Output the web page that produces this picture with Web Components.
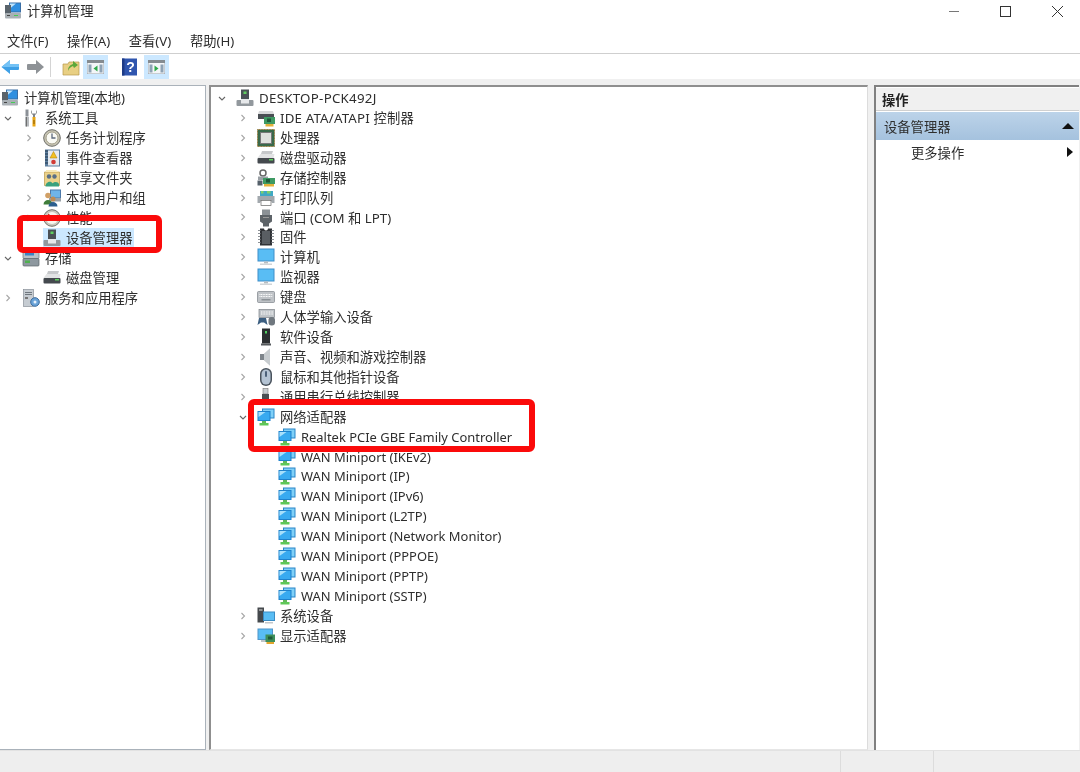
<!DOCTYPE html>
<html lang="zh">
<head>
<meta charset="utf-8">
<title>计算机管理</title>
<style>
  html, body { margin: 0; height: 772px; overflow: hidden; background: #fff; }
  body { font: 13.3px "Noto Sans", "Noto Sans CJK SC", sans-serif; color: #2e2e2e; }
</style>
</head>
<body>
<mmc-window>
  <tree-row slot="left" level="0" icon="mgmt" arrow="none">计算机管理(本地)</tree-row>
  <tree-row slot="left" level="1" icon="tools" arrow="open">系统工具</tree-row>
  <tree-row slot="left" level="2" icon="clock" arrow="closed">任务计划程序</tree-row>
  <tree-row slot="left" level="2" icon="viewer" arrow="closed">事件查看器</tree-row>
  <tree-row slot="left" level="2" icon="share" arrow="closed">共享文件夹</tree-row>
  <tree-row slot="left" level="2" icon="users" arrow="closed">本地用户和组</tree-row>
  <tree-row slot="left" level="2" icon="perf" arrow="closed">性能</tree-row>
  <tree-row slot="left" level="2" icon="device" arrow="none" selected>设备管理器</tree-row>
  <tree-row slot="left" level="1" icon="storage" arrow="open">存储</tree-row>
  <tree-row slot="left" level="2" icon="hdd" arrow="none">磁盘管理</tree-row>
  <tree-row slot="left" level="1" icon="services" arrow="closed">服务和应用程序</tree-row>

  <tree-row slot="center" level="0" icon="device" arrow="open" style="letter-spacing:.27px">DESKTOP-PCK492J</tree-row>
  <tree-row slot="center" level="1" icon="ide" arrow="closed" style="letter-spacing:.17px">IDE ATA/ATAPI 控制器</tree-row>
  <tree-row slot="center" level="1" icon="cpu" arrow="closed">处理器</tree-row>
  <tree-row slot="center" level="1" icon="hdd" arrow="closed">磁盘驱动器</tree-row>
  <tree-row slot="center" level="1" icon="storectl" arrow="closed">存储控制器</tree-row>
  <tree-row slot="center" level="1" icon="printer" arrow="closed">打印队列</tree-row>
  <tree-row slot="center" level="1" icon="port" arrow="closed">端口 (COM 和 LPT)</tree-row>
  <tree-row slot="center" level="1" icon="firmware" arrow="closed">固件</tree-row>
  <tree-row slot="center" level="1" icon="monitor" arrow="closed">计算机</tree-row>
  <tree-row slot="center" level="1" icon="monitor" arrow="closed">监视器</tree-row>
  <tree-row slot="center" level="1" icon="keyboard" arrow="closed">键盘</tree-row>
  <tree-row slot="center" level="1" icon="hid" arrow="closed">人体学输入设备</tree-row>
  <tree-row slot="center" level="1" icon="software" arrow="closed">软件设备</tree-row>
  <tree-row slot="center" level="1" icon="sound" arrow="closed">声音、视频和游戏控制器</tree-row>
  <tree-row slot="center" level="1" icon="mouse" arrow="closed">鼠标和其他指针设备</tree-row>
  <tree-row slot="center" level="1" icon="usb" arrow="closed">通用串行总线控制器</tree-row>
  <tree-row slot="center" level="1" icon="net" arrow="open">网络适配器</tree-row>
  <tree-row slot="center" level="2" icon="net" arrow="none" latin>Realtek PCIe GBE Family Controller</tree-row>
  <tree-row slot="center" level="2" icon="net" arrow="none" latin>WAN Miniport (IKEv2)</tree-row>
  <tree-row slot="center" level="2" icon="net" arrow="none" latin>WAN Miniport (IP)</tree-row>
  <tree-row slot="center" level="2" icon="net" arrow="none" latin>WAN Miniport (IPv6)</tree-row>
  <tree-row slot="center" level="2" icon="net" arrow="none" latin>WAN Miniport (L2TP)</tree-row>
  <tree-row slot="center" level="2" icon="net" arrow="none" latin>WAN Miniport (Network Monitor)</tree-row>
  <tree-row slot="center" level="2" icon="net" arrow="none" latin>WAN Miniport (PPPOE)</tree-row>
  <tree-row slot="center" level="2" icon="net" arrow="none" latin>WAN Miniport (PPTP)</tree-row>
  <tree-row slot="center" level="2" icon="net" arrow="none" latin>WAN Miniport (SSTP)</tree-row>
  <tree-row slot="center" level="1" icon="sys" arrow="closed">系统设备</tree-row>
  <tree-row slot="center" level="1" icon="display" arrow="closed">显示适配器</tree-row>
</mmc-window>

<script>
const ICONS = {
  mgmt: `<rect x="5" y="0.500" width="12" height="10" fill="#3a6ea5"/><rect x="6" y="1.500" width="10" height="8" fill="#2f8fe0"/><path d="M6 1.500h6l-6 5z" fill="#bfe3fb"/><rect x="1" y="3" width="6" height="9" fill="#59636b"/><rect x="1" y="11" width="16" height="5.500" rx="1" fill="#a9b0b5"/><rect x="3" y="13" width="3" height="1" fill="#444"/><rect x="10" y="13" width="4" height="1" fill="#4c5"/>`,
  tools: `<path d="M5 0.500v7" stroke="#8b9096" stroke-width="3"/><path d="M3 8h4v9.500H3z" fill="#b6babd"/><path d="M4 8h1v9.500H4z" fill="#6f6f6f"/><path d="M10 1c-1.500 1.500-1 4 1 5v2h2V6c2-1 2.500-3.500 1-5v3.500h-4z" fill="#808488"/><path d="M10.500 8h3v9.500h-3z" fill="#e8a615"/><path d="M11.500 11h1v4h-1z" fill="#8a5a00"/>`,
  clock: `<circle cx="9" cy="9" r="8.300" fill="#c8c5b4" stroke="#6d6d66"/><circle cx="9" cy="9" r="6" fill="#fafaf4" stroke="#a39f8a"/><path d="M9 4.500V9h3.500" fill="none" stroke="#5e6a7d" stroke-width="1.300"/>`,
  viewer: `<rect x="2" y="0.500" width="15" height="17" fill="#5c7e9e"/><rect x="5" y="1.500" width="11" height="15" fill="#e6eaf0"/><path d="M2 2h3M2 5h3M2 8h3M2 11h3M2 14h3" stroke="#22364d"/><path d="M10.500 2.500l3.500 6.500H7z" fill="#f4c020" stroke="#a87a00" stroke-width=".5"/><circle cx="10.500" cy="13" r="2.300" fill="#d23b35"/>`,
  share: `<path d="M1.500 3h15v13.500h-15z" fill="#ecd28a" stroke="#b9994a" stroke-width=".7"/><path d="M3 1h10l3 2H3z" fill="#f8e9b8"/><circle cx="6" cy="7.500" r="2.200" fill="#5a6f86"/><circle cx="11.500" cy="7.500" r="2.200" fill="#5a6f86"/><path d="M2.500 17.500c0-5 6-6 7-3v3zM8 17.500c0-5 7-6 8-2.500v2.500z" fill="#3aa17d"/>`,
  users: `<rect x="7" y="0.500" width="11" height="9" fill="#4b78a8"/><rect x="8" y="1.500" width="9" height="7" fill="#6fb4e8"/><rect x="6" y="9" width="12" height="3.500" fill="#9aa2a9"/><circle cx="5" cy="6.500" r="2.800" fill="#d1a066"/><path d="M0.500 15.500c0-6 9-6 9 0z" fill="#3f7d3a"/><circle cx="10" cy="10" r="2.500" fill="#bf8b52"/><path d="M5.500 17.500c0-6 9-6 9 0z" fill="#2c5f8f"/>`,
  perf: `<circle cx="9" cy="9" r="8.300" fill="#c9c7bd" stroke="#70706a"/><circle cx="9" cy="9" r="6" fill="#f7f6f0"/><path d="M9 9L5 5" stroke="#c9372c" stroke-width="1.500"/>`,
  device: `<rect x="5" y="0.500" width="8" height="10" fill="#4a5056"/><rect x="7.500" y="2.500" width="3" height="2.500" fill="#5fd05f"/><rect x="0.500" y="11" width="17" height="6" rx="1" fill="#92989d"/><rect x="5" y="10" width="8" height="4.500" fill="#e6e8ea"/>`,
  storage: `<rect x="1" y="1.500" width="16" height="8" rx="1" fill="#bac2c8" stroke="#6f7880" stroke-width=".7"/><rect x="1" y="9.500" width="16" height="7.500" rx="1" fill="#8e989f" stroke="#5c656c" stroke-width=".7"/><rect x="3" y="3.500" width="9" height="3" fill="#3c84c4"/><rect x="3" y="11.500" width="5" height="2.500" fill="#4fb14f"/>`,
  hdd: `<path d="M4 5l1-3h11l-1 3z" fill="#c6c8ca"/><path d="M0.500 9l3-4h14l-1 4z" fill="#e2e3e4"/><rect x="0.500" y="9" width="17" height="5.500" rx="1" fill="#44494e"/><rect x="12" y="10" width="4" height="1.500" fill="#5fd05f"/>`,
  services: `<rect x="1.500" y="0.500" width="10" height="17" fill="#c6ccd2" stroke="#8a929a" stroke-width=".7"/><path d="M3 3.500h7M3 5.500h7" stroke="#6f777e"/><rect x="3" y="8" width="3" height="2" fill="#777"/><circle cx="13" cy="13" r="4.300" fill="#6aa3d8" stroke="#3a6b9e"/><circle cx="13" cy="13" r="1.500" fill="#e7f1fb"/>`,
  ide: `<path d="M2 2h14l1 3H1z" fill="#d8d9da"/><rect x="1" y="5" width="16" height="5" fill="#4a4f54"/><rect x="7" y="8" width="11" height="7" fill="#3e9a63"/><rect x="10" y="9.500" width="4" height="3.500" fill="#1f5a39"/><rect x="8.500" y="15" width="8" height="2.500" fill="#e3b13a"/>`,
  cpu: `<rect x="0.500" y="0.500" width="17" height="17" fill="#39694a" stroke="#9d7b39" stroke-dasharray="1 .6"/><rect x="3.500" y="3.500" width="11" height="11" fill="#dfe0dd" stroke="#777"/>`,
  storectl: `<circle cx="6" cy="4" r="3" fill="none" stroke="#666" stroke-width="1.500"/><path d="M1 7.500h10v3.500H1z" fill="#9aa0a5"/><rect x="6" y="9" width="12" height="6" fill="#3e9a63"/><rect x="9" y="10" width="4" height="3.500" fill="#1f5a39"/><rect x="7" y="15" width="10" height="2.500" fill="#e3b13a"/><path d="M0.500 11.500h5v5h-5z" fill="#55606a"/>`,
  printer: `<rect x="3" y="2" width="13" height="5" fill="#3fa8c4"/><path d="M4 2h2.500v2.500H4zM10 2h3.500v2.500H10z" fill="#7fcf6a"/><path d="M0.500 7h17v7h-2.500l-1-2.500H4L3 14H0.500z" fill="#a2a8ad"/><rect x="4" y="11.500" width="10" height="5" fill="#fff" stroke="#666" stroke-width=".7"/>`,
  port: `<rect x="5" y="0.500" width="8" height="5.500" fill="#8b9196"/><path d="M3 6h12v6.500l-3 2v3H6v-3l-3-2z" fill="#5d6368"/><path d="M6 8.500h6" stroke="#999"/>`,
  firmware: `<path d="M3 0.500h4a2 2 0 004 0h4v17H3z" fill="#2f3236"/><rect x="5" y="3" width="8" height="13" fill="#595e63"/><path d="M1 2.500h2.500M1 5.500h2.500M1 8.500h2.500M1 11.500h2.500M1 14.500h2.500M14.500 2.500H17M14.500 5.500H17M14.500 8.500H17M14.500 11.500H17M14.500 14.500H17" stroke="#8c9196"/>`,
  monitor: `<rect x="0.500" y="0.500" width="17" height="13" fill="#3f8ec9"/><rect x="1.500" y="1.500" width="15" height="11" fill="#59bdf4"/><rect x="7" y="13.500" width="4" height="2" fill="#b8bdc1"/><rect x="3" y="15.500" width="12" height="1.500" fill="#d2d5d8"/>`,
  keyboard: `<rect x="0.500" y="3.500" width="17" height="11" rx="1" fill="#bfc3c7" stroke="#7e8489" stroke-width=".7"/><path d="M2.500 6.500h13M2.500 8.500h13" stroke="#fff" stroke-dasharray="1 .6"/><rect x="4.500" y="11" width="9" height="1.500" fill="#8b9196"/>`,
  hid: `<rect x="2" y="1.500" width="15.500" height="8" fill="#bfc4c8" stroke="#7e8489" stroke-width=".7"/><path d="M4 4h12M4 6h12" stroke="#fff" stroke-dasharray="1 .6"/><path d="M0.500 17l1.500-7h7l1.500 7-3.500-2.500H4z" fill="#3b5e80"/><rect x="11.500" y="9" width="6.500" height="8.500" rx="3" fill="#6f777e"/>`,
  software: `<rect x="5" y="0.500" width="8" height="15" fill="#2b2e31"/><rect x="8" y="3" width="2" height="2.500" fill="#4fd05f"/><rect x="4" y="15.500" width="10" height="2" fill="#55595d"/>`,
  sound: `<path d="M3 6h4l6-5.500v17L7 12H3z" fill="#a9afb4"/><path d="M7 6l6-5.500v17L7 12z" fill="#c7cccf"/><path d="M3 6h4v6H3z" fill="#7d848a"/>`,
  mouse: `<rect x="3" y="0" width="12" height="18" rx="6" fill="#49525c"/><rect x="4.500" y="1.500" width="9" height="15" rx="4.500" fill="#b4c3d3"/><rect x="8" y="3" width="2" height="6" rx="1" fill="#4b6079"/>`,
  usb: `<rect x="6" y="0.500" width="5" height="5.500" fill="#c8ccd0" stroke="#777" stroke-width=".6"/><rect x="5" y="6" width="7" height="11" fill="#4b4f53"/>`,
  net: `<rect x="5" y="0.500" width="12.500" height="10" fill="#2a86c8"/><rect x="6" y="1.500" width="10.500" height="8" fill="#7fd0f8"/><rect x="0.500" y="3" width="13" height="10" fill="#1f82cc"/><rect x="1.500" y="4" width="11" height="8" fill="#38aaf0"/><path d="M1.500 4h7l-7 5z" fill="#a8e0fb"/><rect x="5" y="13" width="4" height="2" fill="#62b85c"/><rect x="2.500" y="15" width="9" height="2.500" fill="#5fc858"/>`,
  sys: `<rect x="0.500" y="0.500" width="6.500" height="15" fill="#45494d"/><rect x="2" y="2.500" width="3.500" height="1" fill="#ddd"/><rect x="6" y="4.500" width="12" height="9.500" fill="#3b8cc4"/><rect x="7" y="5.500" width="10" height="7.500" fill="#59bdf4"/><rect x="8" y="15" width="8" height="1.500" fill="#c3c7ca"/>`,
  display: `<rect x="0.500" y="1.500" width="15.500" height="11.500" fill="#4f94c9"/><rect x="1.500" y="2.500" width="13.500" height="9.500" fill="#59bdf4"/><rect x="4" y="13" width="6" height="2" fill="#c0c4c8"/><rect x="8.500" y="7.500" width="9.500" height="7.500" fill="#3e8f5a"/><rect x="11" y="9.500" width="4.500" height="3" fill="#1f5a39"/><rect x="9.500" y="15" width="7.500" height="2" fill="#e3a52d"/>`,
  back: `<path d="M0.500 9L9 2v4h8a1 1 0 011 1v4a1 1 0 01-1 1H9v4z" fill="#3fa0e6"/><path d="M0.500 9L9 2v4h9v3z" fill="#74c2f5"/>`,
  forward: `<path d="M18 9L10 2v4H2a1 1 0 00-1 1v4a1 1 0 001 1h8v4z" fill="#8e9296"/>`,
  up: `<path d="M1 6h5l1-2h10v13H1z" fill="#e8cf83" stroke="#b8994b" stroke-width=".7"/><path d="M6 13c0-4 2-6 5-7V3l5 4-4 3-1-2c-2 1-4 2-5 5z" fill="#5ca83a"/>`,
  help: `<rect x="1" y="0.500" width="15" height="17" fill="#2f55ae"/><rect x="1" y="0.500" width="2.500" height="17" fill="#1e3b86"/><text x="9.500" y="13.500" font-size="14" font-weight="700" text-anchor="middle" fill="#fff" font-family="Liberation Sans">?</text>`,
  panelLeft: `<rect x="0" y="0" width="17" height="14" fill="#f4f6f8" stroke="#8b9196" stroke-width=".8"/><rect x="0" y="0" width="17" height="3" fill="#858b90"/><rect x="1.500" y="4.500" width="3" height="8" fill="#8fa3b5"/><rect x="12.500" y="4.500" width="3" height="8" fill="#8fa3b5"/><path d="M10.500 5.500v6l-4-3z" fill="#2fa84a"/>`,
  panelRight: `<rect x="0" y="0" width="17" height="14" fill="#f4f6f8" stroke="#8b9196" stroke-width=".8"/><rect x="0" y="0" width="17" height="3" fill="#858b90"/><rect x="1.500" y="4.500" width="3" height="8" fill="#8fa3b5"/><rect x="12.500" y="4.500" width="3" height="8" fill="#8fa3b5"/><path d="M6.500 5.500v6l4-3z" fill="#2fa84a"/>`
}

class AppIcon extends HTMLElement {
  constructor() {
    super()
    this.attachShadow({ mode: 'open' })
  }
  connectedCallback() {
    let name = this.getAttribute("name")
    let w = this.getAttribute("w") || 18
    let h = this.getAttribute("h") || 18
    this.shadowRoot.innerHTML = `
      <style>:host { display:block; width:${w}px; height:${h}px; flex:none; } svg { display:block; }</style>
      <svg xmlns="http://www.w3.org/2000/svg" width="${w}" height="${h}" viewBox="0 0 ${w} ${h}">${ICONS[name]}</svg>`
  }
}
customElements.define("app-icon", AppIcon)

class TreeRow extends HTMLElement {
  constructor() {
    super()
    this.attachShadow({ mode: 'open' })
  }
  connectedCallback() {
    let level = +this.getAttribute("level")
    let arrow = this.getAttribute("arrow")
    let chevron = ""
    if (arrow == "open") chevron = `<path d="M2 4l3 3 3-3" />`
    if (arrow == "closed") chevron = `<path d="M3.500 2l3 3-3 3" />`
    this.shadowRoot.innerHTML = `
      <style>
        :host { display:flex; align-items:center; height:19.93px; white-space:nowrap; }
        :host([latin]) { font-size:12.95px; }
        :host([slot="left"]) { height:20px; }
        .arrow { width:21px; flex:none; display:flex; justify-content:center; margin-left:${level * 21}px; }
        .arrow svg { fill:none; stroke:${arrow == "open" ? "#666" : "#a6a6a6"}; stroke-width:1.1; }
        .item { display:flex; align-items:center; gap:5px; height:20px; padding-right:2px; margin-left:4px; }
        :host([selected]) .item { background:#cce8ff; }
        .text { line-height:20px; }
      </style>
      <div class="arrow"><svg width="10" height="10" viewBox="0 0 10 10">${chevron}</svg></div>
      <div class="item">
        <app-icon name="${this.getAttribute("icon")}"></app-icon>
        <div class="text"><slot></slot></div>
      </div>`
  }
}
customElements.define("tree-row", TreeRow)

class MenuBar extends HTMLElement {
  constructor() {
    super()
    this.attachShadow({ mode: 'open' })
    this.shadowRoot.innerHTML = `
      <style>
        :host { display:flex; gap:18.6px; height:25px; align-items:center; padding-left:7px; border-bottom:1px solid #cfcfcf; }
      </style>
      <span>文件(F)</span><span>操作(A)</span><span>查看(V)</span><span>帮助(H)</span>`
  }
}
customElements.define("menu-bar", MenuBar)

class ToolBar extends HTMLElement {
  constructor() {
    super()
    this.attachShadow({ mode: 'open' })
    this.shadowRoot.innerHTML = `
      <style>
        :host { display:flex; align-items:center; height:25px; padding-left:1px; }
        .sep { width:1px; height:20px; background:#d4d4d4; margin:0 11px 0 6px; }
        .on { width:25px; height:24px; background:#cce8ff; display:flex; align-items:center; justify-content:center; }
      </style>
      <app-icon name="back"></app-icon>
      <app-icon name="forward" style="margin-left:7px"></app-icon>
      <div class="sep"></div>
      <app-icon name="up"></app-icon>
      <div class="on" style="margin-left:3px"><app-icon name="panelLeft" w="17" h="14"></app-icon></div>
      <app-icon name="help" style="margin-left:13px"></app-icon>
      <div class="on" style="margin-left:5px"><app-icon name="panelRight" w="17" h="14"></app-icon></div>`
  }
}
customElements.define("tool-bar", ToolBar)

class ActionPane extends HTMLElement {
  constructor() {
    super()
    this.attachShadow({ mode: 'open' })
    this.shadowRoot.innerHTML = `
      <style>
        :host { display:block; }
        .head { height:22px; line-height:25px; padding-left:6px; background:#f0f0f0; border-bottom:1px solid #d0d0d0; font-weight:700; color:#222; margin-bottom:1px; }
        .group { display:flex; align-items:center; justify-content:space-between; height:28px; padding:0 5px 0 8px;
          background:linear-gradient(#bcd3e9, #a5c2de); }
        .more { display:flex; align-items:center; justify-content:space-between; height:24px; padding:0 6px 0 35px; }
        .up { width:0; height:0; border:6px solid transparent; border-top:0; border-bottom:6px solid #111; }
        .right { width:0; height:0; border:5.500px solid transparent; border-right:0; border-left:6px solid #111; }
      </style>
      <div class="head">操作</div>
      <div class="group"><span>设备管理器</span><i class="up"></i></div>
      <div class="more"><span>更多操作</span><i class="right"></i></div>`
  }
}
customElements.define("action-pane", ActionPane)

class MmcWindow extends HTMLElement {
  constructor() {
    super()
    this.attachShadow({ mode: 'open' })
    this.shadowRoot.innerHTML = `
      <style>
        :host { display:block; position:relative; width:1080px; height:772px; overflow:hidden; background:#fff; }
        .all { display:flex; flex-direction:column; height:772px; filter:blur(.4px); }
        .title { display:flex; align-items:center; height:21px; padding-bottom:7px; flex:none; }
        .title app-icon { margin:0 5px 0 4px; }
        .caption { flex:1; }
        .ctrl { display:flex; margin-bottom:-7px; }
        .ctrl svg { display:block; }
        .strip { height:6px; flex:none; background:#f0f0f0; }
        .panes { flex:1; display:flex; background:#f0f0f0; min-height:0; }
        .pane { background:#fff; overflow:hidden; box-sizing:border-box; }
        .left { width:206px; border:1px solid #aab2ba; border-left:0; padding-top:2px; }
        .left slot { display:block; margin-left:-24px; }
        .center { width:659px; margin-left:3px; border:solid #8f8f8f; border-width:2px 1px 1px 2px; border-right-color:#dcdcdc; border-bottom-color:#e6e6e6; padding-top:1px; }
        .right { width:205px; margin-left:6px; border-left:2px solid #808080; border-top:2px solid #808080; padding-top:1px; }
        .status { height:22px; flex:none; background:#eeeeee; border-top:1px solid #e2e2e2; box-sizing:border-box; display:flex; justify-content:flex-end; }
        .status div { border-left:1px solid #dcdcdc; }
        .mark { position:absolute; box-sizing:border-box; border:6px solid #fb0a0a; border-radius:6px; }
      </style>
      <div class="all">
        <div class="title">
          <app-icon name="mgmt"></app-icon>
          <div class="caption">计算机管理</div>
          <div class="ctrl">
            <svg width="132" height="28" viewBox="0 0 132 28" fill="none" stroke="#333">
              <path d="M1 11.500h10" stroke="#777"/>
              <rect x="52.500" y="6.500" width="10" height="10"/>
              <path d="M104 6l11 11M115 6l-11 11"/>
            </svg>
          </div>
        </div>
        <menu-bar></menu-bar>
        <tool-bar></tool-bar>
        <div class="strip"></div>
        <div class="panes">
          <div class="pane left"><slot name="left"></slot></div>
          <div class="pane center"><slot name="center"></slot></div>
          <div class="pane right"><action-pane></action-pane></div>
        </div>
        <div class="status"><div style="width:92px"></div><div style="width:146px"></div></div>
      </div>
      <div class="mark" style="left:17px;top:215px;width:145px;height:38px"></div>
      <div class="mark" style="left:248px;top:399px;width:287px;height:53px"></div>`
  }
}
customElements.define("mmc-window", MmcWindow)
</script>
</body>
</html>
